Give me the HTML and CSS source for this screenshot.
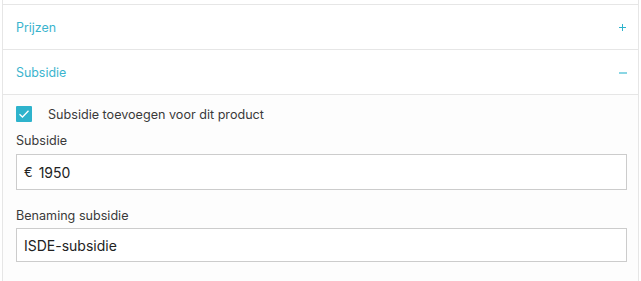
FILE: index.html
```html
<!DOCTYPE html>
<html lang="nl">
<head>
    <meta charset="UTF-8">
    <meta name="viewport" content="width=device-width, initial-scale=1.0">
    <title>Product - Subsidie</title>
    <link rel="stylesheet" href="styles.css">
</head>
<body>

<div class="panel">
    <!-- vorige sectie, alleen de onderrand is zichtbaar -->
    <div class="section-prev"></div>

    <div class="section">
        <div class="section-header">
            <span class="section-title">Prijzen</span>
            <span class="section-toggle plus"></span>
        </div>
    </div>

    <div class="section open">
        <div class="section-header">
            <span class="section-title">Subsidie</span>
            <span class="section-toggle minus"></span>
        </div>
        <div class="section-body">
            <label class="check-row">
                <span class="checkbox">
                    <svg width="12" height="10" viewBox="0 0 12 10"><path d="M1.5 5.2 L4.5 8 L10.5 1.8" fill="none" stroke="#fff" stroke-width="1.3"/></svg>
                </span>
                <span class="check-label">Subsidie toevoegen voor dit product</span>
            </label>

            <div class="field">
                <div class="field-label">Subsidie</div>
                <div class="input input-money">
                    <span class="currency">€</span>
                    <span class="value">1950</span>
                </div>
            </div>

            <div class="field">
                <div class="field-label">Benaming subsidie</div>
                <div class="input input-text">
                    <span class="value">ISDE-subsidie</span>
                </div>
            </div>
        </div>
    </div>
</div>

</body>
</html>
```

FILE: styles.css
```css
/* algemeen */
body {
    margin: 0;
    font-family: 'Inter', 'Noto Sans', sans-serif;
    color: #3a3a3a;
    background-color: #fff;
    height: 281px;
    overflow: hidden;
}

.panel {
    margin-left: 2px;
    width: 635px;
    height: 281px;
    border-left: 1px solid #e6e6e6;
    border-right: 1px solid #e6e6e6;
}

.section-prev {
    height: 4px;
    border-bottom: 1px solid #e6e6e6;
}

.section {
    border-bottom: 1px solid #e6e6e6;
}

/* sectie kop */
.section-header {
    display: flex;
    align-items: center;
    justify-content: space-between;
    height: 44px;
    padding: 0 12px 0 13px;
    color: #3ab4ce;
    font-size: 12.4px;
}

/* plus / min icoon */
.section-toggle {
    position: relative;
    width: 7px;
    height: 7px;
    margin-top: 1px;
}

.section-toggle::before,
.section-toggle.plus::after {
    content: "";
    position: absolute;
    background-color: #2db3cc;
}

.section-toggle::before {
    left: 0;
    top: 3px;
    width: 7px;
    height: 1px;
}

.section-toggle.plus::after {
    left: 3px;
    top: 0;
    width: 1px;
    height: 7px;
}

.section-toggle.minus {
    width: 8px;
    margin-right: -1px;
}

.section-toggle.minus::before {
    width: 8px;
    height: 2px;
    top: 3px;
    background-color: #8ad6e4;
}

/* sectie inhoud */
.section.open {
    border-bottom: none;
}

.section.open .section-header {
    border-bottom: 1px solid #e6e6e6;
}

.section-body {
    padding: 11px 11px 0 13px;
    background-color: #fdfdfd;
    height: 186px;
}

.check-row {
    display: flex;
    align-items: center;
    height: 16px;
}

.checkbox {
    width: 16px;
    height: 16px;
    background-color: #2eb3cc;
    border-radius: 1px;
    display: flex;
    align-items: center;
    justify-content: center;
}

.check-label {
    margin-left: 16px;
    font-size: 12.6px;
    margin-top: 1px;
}

.field {
    margin-top: 11px;
}

.field + .field {
    margin-top: 18px;
}

.field-label {
    font-size: 12.6px;
    line-height: 16px;
    margin-bottom: 5px;
}

.field + .field .field-label {
    margin-bottom: 4px;
}

.input {
    display: flex;
    align-items: center;
    height: 34px;
    border: 1px solid #cccccc;
    background-color: #fff;
    font-size: 14px;
    color: #222;
}

.input-text {
    height: 32px;
}

.input-money .currency {
    margin-left: 7px;
    font-size: 13px;
}

.input-money .value {
    margin-left: 6px;
}

.input-text .value {
    margin-left: 7px;
}
```
